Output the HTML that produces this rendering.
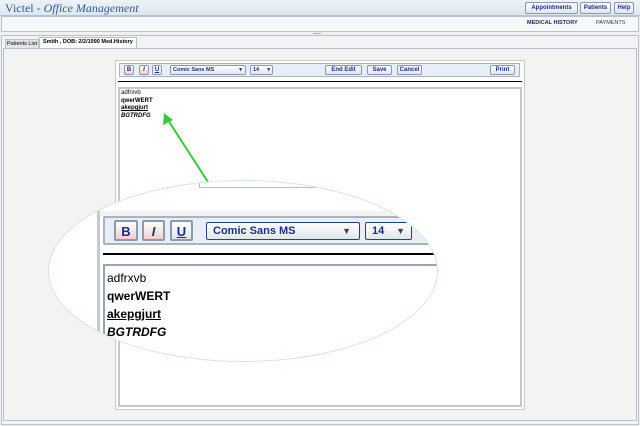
<!DOCTYPE html>
<html><head><style>
*{margin:0;padding:0;box-sizing:border-box}
body{width:640px;height:426px;background:#eef1f4;font-family:"Liberation Sans",Arial,sans-serif;position:relative;overflow:hidden}
.a{position:absolute}
.btn{position:absolute;border:1px solid #8a9ab0;border-radius:2px;background:linear-gradient(#fff,#dfe6ee);color:#1a2f8a;font-weight:bold;font-size:6px;text-align:center;line-height:9px;white-space:nowrap;overflow:hidden}
</style></head><body>
<div class="a" style="left:0;top:0;width:640px;height:16px;background:linear-gradient(#edf3f9,#dde7f1);border-bottom:1px solid #b8c2cc"></div>
<div class="a" style="left:5px;top:1px;font-family:'Liberation Serif',serif;font-size:12px;color:#2c5c8c">Victel - <i>Office Management</i></div>
<div class="btn" style="left:525px;top:2px;width:53px;height:12px;line-height:10px">Appointments</div>
<div class="btn" style="left:580px;top:2px;width:31px;height:12px;line-height:10px">Patients</div>
<div class="btn" style="left:614px;top:2px;width:20px;height:12px;line-height:10px">Help</div>
<div class="a" style="left:1px;top:16px;width:638px;height:16px;background:#f7f8f9;border:1px solid #b8c2cc"></div>
<div class="a" style="left:527px;top:20px;font-size:5.5px;font-weight:bold;color:#1a2a5a">MEDICAL HISTORY</div>
<div class="a" style="left:596px;top:20px;font-size:5.5px;color:#33445a">PAYMENTS</div>
<div class="a" style="left:313px;top:33px;width:8px;height:1px;background:#aab"></div>
<div class="a" style="left:1px;top:35px;width:638px;height:390px;background:#f3f3f3;border:1px solid #b8c2cc"></div>
<div class="a" style="left:5px;top:39px;width:34px;height:10px;background:#e4e4e4;border:1px solid #b8c2cc;font-size:5.5px;line-height:9px;text-align:center;white-space:nowrap">Patients List</div>
<div class="a" style="left:39px;top:37px;width:98px;height:12px;background:#fff;border:1px solid #b8c2cc;border-bottom:none;font-size:5.5px;font-weight:bold;line-height:9px;padding-left:3px;white-space:nowrap">Smith , DOB: 2/2/1990 Med.History</div>
<div class="a" style="left:3px;top:48px;width:634px;height:373px;background:#f3f3f3;border:1px solid #b8c2cc"></div>
<div class="a" style="left:115px;top:60px;width:410px;height:350px;background:#fff;border:1px solid #c4cad0"></div>
<div class="a" style="left:119px;top:63px;width:401px;height:14px;background:#e8eef5;border:1px solid #aab4c0"></div>
<div class="btn" style="left:124px;top:65px;width:10px;height:10px;background:linear-gradient(#fff,#f4cccc)">B</div>
<div class="btn" style="left:139px;top:65px;width:10px;height:10px;background:linear-gradient(#fff,#f4cccc)"><i>I</i></div>
<div class="btn" style="left:152px;top:65px;width:10px;height:10px"><u>U</u></div>
<div class="btn" style="left:170px;top:65px;width:76px;height:10px;text-align:left;padding-left:2px;font-size:5.5px">Comic Sans MS <span style="float:right;padding-right:3px">▾</span></div>
<div class="btn" style="left:250px;top:65px;width:23px;height:10px;text-align:left;padding-left:2px;font-size:5.5px">14 <span style="float:right;padding-right:2px">▾</span></div>
<div class="btn" style="left:325px;top:65px;width:37px;height:10px">End Edit</div>
<div class="btn" style="left:367px;top:65px;width:25px;height:10px">Save</div>
<div class="btn" style="left:397px;top:65px;width:25px;height:10px">Cancel</div>
<div class="btn" style="left:490px;top:65px;width:25px;height:10px">Print</div>
<div class="a" style="left:118px;top:81px;width:404px;height:1px;background:#000"></div>
<div class="a" style="left:118px;top:87px;width:404px;height:320px;background:#fff;border:2px solid #c4cad0"></div>
<div class="a" style="left:121px;top:90px;font-size:6px;line-height:7.5px">adfrxvb<br><b>qwerWERT</b><br><b><u>akepgjurt</u></b><br><b><i>BGTRDFG</i></b></div>
<svg class="a" style="left:0;top:0" width="640" height="426"><line x1="208" y1="182" x2="168" y2="120" stroke="#3c3" stroke-width="2"/><polygon points="164,113 163,125 173,120" fill="#3c3"/></svg>
<div class="a" style="left:48px;top:180px;width:390px;height:182px;border-radius:50%;overflow:hidden;background:#fff;border:1px solid #cfeccf">
 <div class="a" style="left:150px;top:0;width:240px;height:7px;border-bottom:1px solid #bbb;border-left:1px solid #bbb"></div>
 <div class="a" style="left:48px;top:0;width:3px;height:182px;background:#c4cad0"></div>
 <div class="a" style="left:51px;top:30px;width:340px;height:6px;background:#f3f3f3"></div>
 <div class="a" style="left:54px;top:35px;width:340px;height:29px;background:#e8eef5;border:2px solid #aab4c0;border-radius:2px"></div>
 <div class="btn" style="left:65px;top:39px;width:24px;height:21px;font-size:13px;line-height:19px;background:linear-gradient(#fff,#f4cccc);border-width:2px">B</div>
 <div class="btn" style="left:93px;top:39px;width:23px;height:21px;font-size:13px;line-height:19px;background:linear-gradient(#fff,#f4cccc);border-width:2px"><i>I</i></div>
 <div class="btn" style="left:121px;top:39px;width:23px;height:21px;font-size:13px;line-height:19px;border-width:2px"><u>U</u></div>
 <div class="btn" style="left:157px;top:41px;width:154px;height:18px;font-size:11px;line-height:16px;text-align:left;padding-left:6px;border-color:#2a3f8a">Comic Sans MS<span style="float:right;padding-right:8px;color:#444;font-size:9px">▼</span></div>
 <div class="btn" style="left:316px;top:41px;width:47px;height:18px;font-size:11px;line-height:16px;text-align:left;padding-left:6px;border-color:#2a3f8a">14<span style="float:right;padding-right:6px;color:#444;font-size:9px">▼</span></div>
 <div class="a" style="left:54px;top:72px;width:340px;height:2px;background:#000"></div>
 <div class="a" style="left:54px;top:83px;width:340px;height:110px;border:2px solid #9aa4b0;border-right:none;border-bottom:none"></div>
 <div class="a" style="left:58px;top:88px;font-size:12px;line-height:18px;color:#000">adfrxvb<br><b>qwerWERT</b><br><b><u>akepgjurt</u></b><br><b><i>BGTRDFG</i></b></div>
</div>
</body></html>
